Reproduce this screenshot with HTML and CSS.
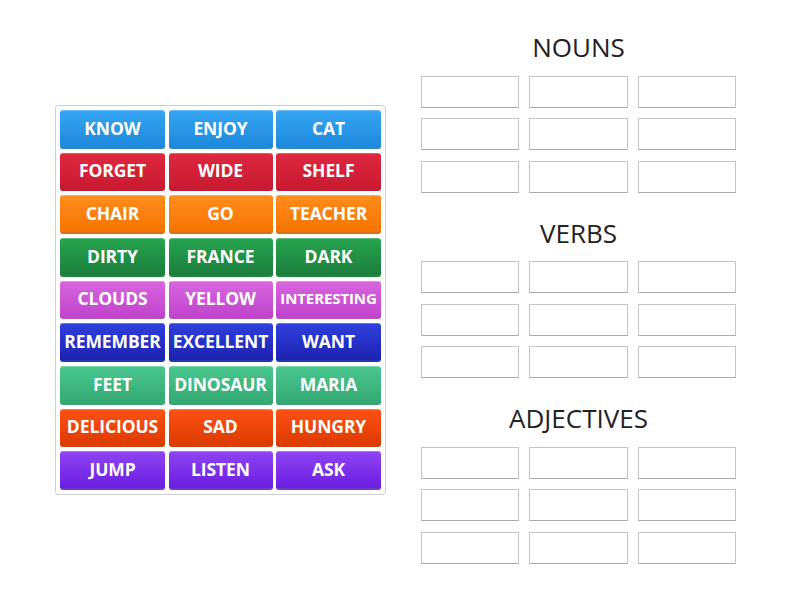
FILE: index.html
```html
<!DOCTYPE html>
<html>
<head>
<meta charset="utf-8">
<link rel="stylesheet" href="styles.css">
</head>
<body>
<div class="page">
  <div class="bank">
    <div class="tile c-blue">KNOW</div>
    <div class="tile c-blue">ENJOY</div>
    <div class="tile c-blue">CAT</div>
    <div class="tile c-red">FORGET</div>
    <div class="tile c-red">WIDE</div>
    <div class="tile c-red">SHELF</div>
    <div class="tile c-orange">CHAIR</div>
    <div class="tile c-orange">GO</div>
    <div class="tile c-orange">TEACHER</div>
    <div class="tile c-green">DIRTY</div>
    <div class="tile c-green">FRANCE</div>
    <div class="tile c-green">DARK</div>
    <div class="tile c-pink">CLOUDS</div>
    <div class="tile c-pink">YELLOW</div>
    <div class="tile c-pink small">INTERESTING</div>
    <div class="tile c-navy">REMEMBER</div>
    <div class="tile c-navy">EXCELLENT</div>
    <div class="tile c-navy">WANT</div>
    <div class="tile c-mint">FEET</div>
    <div class="tile c-mint">DINOSAUR</div>
    <div class="tile c-mint">MARIA</div>
    <div class="tile c-flame">DELICIOUS</div>
    <div class="tile c-flame">SAD</div>
    <div class="tile c-flame">HUNGRY</div>
    <div class="tile c-purple">JUMP</div>
    <div class="tile c-purple">LISTEN</div>
    <div class="tile c-purple">ASK</div>
  </div>
  <div class="groups">
    <section class="group">
      <h2 class="title">NOUNS</h2>
      <div class="slots">
        <div class="slot"></div><div class="slot"></div><div class="slot"></div>
        <div class="slot"></div><div class="slot"></div><div class="slot"></div>
        <div class="slot"></div><div class="slot"></div><div class="slot"></div>
      </div>
    </section>
    <section class="group">
      <h2 class="title">VERBS</h2>
      <div class="slots">
        <div class="slot"></div><div class="slot"></div><div class="slot"></div>
        <div class="slot"></div><div class="slot"></div><div class="slot"></div>
        <div class="slot"></div><div class="slot"></div><div class="slot"></div>
      </div>
    </section>
    <section class="group">
      <h2 class="title">ADJECTIVES</h2>
      <div class="slots">
        <div class="slot"></div><div class="slot"></div><div class="slot"></div>
        <div class="slot"></div><div class="slot"></div><div class="slot"></div>
        <div class="slot"></div><div class="slot"></div><div class="slot"></div>
      </div>
    </section>
  </div>
</div>
</body>
</html>
```
FILE: styles.css
```css
html, body {
  margin: 0;
  padding: 0;
  background: #fff;
  font-family: "Open Sans", "Liberation Sans", sans-serif;
}
.page {
  width: 800px;
  height: 600px;
  display: flex;
  align-items: flex-start;
}
.bank {
  margin: 105px 0 0 55px;
  width: 321px;
  height: 380px;
  padding: 4px;
  border: 1px solid #cfcfcf;
  border-radius: 3px;
  display: grid;
  grid-template-columns: 105px 104px 105px;
  grid-template-rows: repeat(9, 1fr);
  column-gap: 3.5px;
  row-gap: 4px;
}
.tile {
  display: flex;
  align-items: center;
  justify-content: center;
  color: #fff;
  font-weight: 700;
  font-size: 17.5px;
  letter-spacing: -0.1px;
  border-radius: 3px;
  box-sizing: border-box;
  border-bottom: 2px solid rgba(0,0,0,0.18);
  box-shadow: inset 0 1px 0 rgba(255,255,255,0.25);
  white-space: nowrap;
  padding-bottom: 1px;
}
.tile.small { font-size: 15px; }
.c-blue   { background: linear-gradient(#36a6f4, #1d88dc); }
.c-red    { background: linear-gradient(#e02840, #c81a30); }
.c-orange { background: linear-gradient(#ff8c1e, #f67400); }
.c-green  { background: linear-gradient(#27a550, #1b7e3c); }
.c-pink   { background: linear-gradient(#d866e0, #c044cc); }
.c-navy   { background: linear-gradient(#2f40e0, #1d22ae); }
.c-mint   { background: linear-gradient(#4ac890, #34a872); }
.c-flame  { background: linear-gradient(#ff5214, #dc3a00); }
.c-purple { background: linear-gradient(#9044f6, #6a1ee0); }

.groups {
  margin: 29px 0 0 35px;
  width: 315px;
  display: flex;
  flex-direction: column;
  gap: 22px;
}
.title {
  margin: 0 0 10.5px;
  font-weight: 400;
  font-size: 26px;
  line-height: 36px;
  color: #222;
  text-align: center;
}
.slots {
  display: grid;
  grid-template-columns: repeat(3, 1fr);
  grid-auto-rows: 32px;
  column-gap: 10px;
  row-gap: 10.5px;
}
.slot {
  border: 1px solid #c4c4c4;
  border-bottom-color: #aaa;
}
```
